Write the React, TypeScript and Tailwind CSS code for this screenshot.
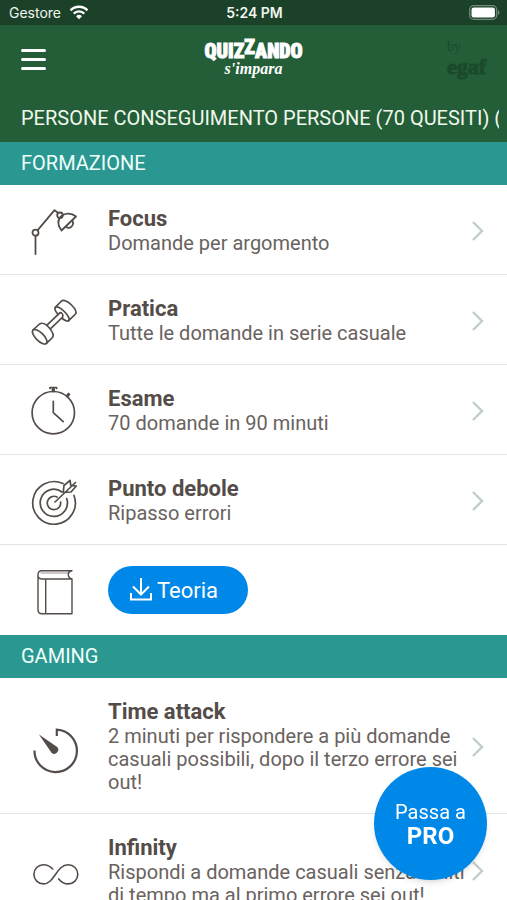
import type { ReactNode } from "react";

interface MenuItem {
  title: string;
  description: string;
  icon: ReactNode;
}

const iconClass = "size-12 shrink-0 overflow-visible fill-none stroke-[#544c48]";

const LampIcon = () => (
  <svg viewBox="0 0 48 48" className={iconClass} strokeWidth="1.8" strokeLinecap="round" strokeLinejoin="round">
    <path d="M5.500 47V28.800M7.700 23.200 24.500 3.200l3.500 2.600" />
    <circle cx="5.500" cy="25.700" r="3" />
    <circle cx="30" cy="8.300" r="2.800" />
    <path d="M31.500 23.500C27.500 18.500 27 12.500 31.500 9 35.500 5.500 41.500 6 46 9.500Z" />
    <path d="M36 19.800c3.500 3 9-1.500 6.300-6.300" />
  </svg>
);

const DumbbellIcon = () => (
  <svg viewBox="0 0 48 48" className={iconClass} strokeWidth="1.7" strokeLinecap="round" strokeLinejoin="round">
    <ellipse cx="9.700" cy="39.700" rx="9.500" ry="4" transform="rotate(45 9.700 39.700)" />
    <path d="M3 33 9.500 27C12 25.500 16 27 19 30.500S24.500 38 22.500 40.500L16.400 46.400" />
    <path d="M16.700 28.300 29.300 16.300M20.700 31.700 32.700 20M29.300 16.300c1-2.300 4.500 1 3.400 3.700" />
    <path d="M25.300 10.300 31 4.500c2.500-2.500 7 0 10.500 3.500s6 6.500 4 9l-6.800 6.700" />
    <path d="M28 17.500c-2.500-3-3.700-5.700-2.700-7.200 1.500-1.500 5.500.7 9 4.200s5.900 7.700 4.400 9.200c-1.200 1-3.700 0-6.500-2.200" />
  </svg>
);

const StopwatchIcon = () => (
  <svg viewBox="0 0 48 48" className={iconClass} strokeWidth="1.7" strokeLinecap="round" strokeLinejoin="round">
    <circle cx="23.300" cy="25.700" r="21.200" />
    <path d="M23.300 14.300v11.400l9.900 9M20 .500h6.600M20 .500v1M26.600 .500v1M22.500 1v3.500M24.100 1v3.500M36.500 8.700l2-2.200M37.500 9.700l2-2.200" />
  </svg>
);

const TargetIcon = () => (
  <svg viewBox="0 0 48 48" className={iconClass} strokeWidth="1.7" strokeLinecap="round" strokeLinejoin="round">
    <path d="M33 6.600A21.300 21.300 0 1 0 44 18.500" />
    <path d="M32 15A13.600 13.600 0 1 0 36.700 21.500" />
    <path d="M27 20A6.700 6.700 0 1 0 30.600 25" />
    <path d="M25 25 45.500 5.500M33.300 14.500l.7-6 6-5.200.8 5 5.500.7-5.300 6-7.500.5" />
  </svg>
);

const BookIcon = () => (
  <svg viewBox="0 0 48 48" className={iconClass} strokeWidth="1.4" strokeLinecap="round" strokeLinejoin="round">
    <path d="M42 4.700H12Q8 4.700 8 8.700v35q0 4 4 4h30V13H12Q8 13 8 9M42 4.700c-5 .8-5 6.500 0 8.300M15.700 13v34.500" />
    <path d="M11 7h28" strokeWidth="0.600" />
  </svg>
);

const TimerIcon = () => (
  <svg viewBox="0 0 48 48" className={iconClass} strokeWidth="2.2">
    <path d="M26.800 13V6.700a21.200 21.200 0 1 1-22.300 20.800" />
    <path d="M9 11.500 26.800 23.700a4 4 0 0 1-5.300 6Z" fill="#544c48" stroke="none" />
  </svg>
);

const InfinityIcon = () => (
  <svg viewBox="0 0 48 48" className={iconClass} strokeWidth="1.6" strokeLinecap="round">
    <path d="M22.700 22C20 19 17 17.700 13.500 17.700a9.600 9.600 0 0 0 0 19.200c11 0 13-19.200 24.700-19.200a9.600 9.600 0 0 1 0 19.200c-4 0-7-2-9.500-5" />
  </svg>
);

const WifiIcon = () => (
  <svg viewBox="0 0 20 15" className="h-[15px] w-5 fill-none stroke-white" strokeWidth="2.4">
    <path d="M1.500 5.300a12 12 0 0 1 17 0M4.700 8.600a7.500 7.500 0 0 1 10.600 0" />
    <path d="M7 11.200a4.300 4.300 0 0 1 6 0l-3 3Z" fill="white" stroke="none" />
  </svg>
);

const BatteryIcon = () => (
  <svg viewBox="0 0 31 15" className="h-[15px] w-[31px]">
    <rect x="0.700" y="0.700" width="27" height="13.600" rx="4" fill="none" stroke="#718a79" strokeWidth="1.3" />
    <rect x="2.500" y="2.500" width="23.400" height="10" rx="2.200" fill="white" />
    <path d="M29 5v5q1.500-1 1.500-2.500T29 5Z" fill="#718a79" />
  </svg>
);

const Chevron = () => (
  <svg viewBox="0 0 12 20" className="h-5 w-3 shrink-0 fill-none stroke-[#bfd0c6]" strokeWidth="2.4">
    <path d="m1 1 9 9-9 9" />
  </svg>
);

const DownloadIcon = () => (
  <svg viewBox="0 0 24 24" className="size-6 fill-none stroke-white" strokeWidth="2">
    <path d="M12 0v16.500M4 8.500l8 8 8-8M2 15v6.500h20V15" />
  </svg>
);

const training: MenuItem[] = [
  { title: "Focus", description: "Domande per argomento", icon: <LampIcon /> },
  { title: "Pratica", description: "Tutte le domande in serie casuale", icon: <DumbbellIcon /> },
  { title: "Esame", description: "70 domande in 90 minuti", icon: <StopwatchIcon /> },
  { title: "Punto debole", description: "Ripasso errori", icon: <TargetIcon /> },
];

const gaming: MenuItem[] = [
  {
    title: "Time attack",
    description: "2 minuti per rispondere a più domande casuali possibili, dopo il terzo errore sei out!",
    icon: <TimerIcon />,
  },
  {
    title: "Infinity",
    description: "Rispondi a domande casuali senza limiti di tempo ma al primo errore sei out!",
    icon: <InfinityIcon />,
  },
];

const SectionTitle = ({ children }: { children: ReactNode }) => (
  <h2 className="bg-[#2a9790] px-[21px] py-2 text-[20px] leading-[27px] text-[#effffb]">{children}</h2>
);

const MenuRow = ({ title, description, icon }: MenuItem) => (
  <li className="border-b border-[#e4e4e4]">
    <a href="#" className="flex items-center pt-[21px] pr-[23px] pb-[19px] pl-[30px]">
      <span className="-my-2 shrink-0">{icon}</span>
      <span className="ml-[30px] flex-1 pr-1">
        <span className="block text-[22px] leading-[26px] font-bold text-[#544c48]">{title}</span>
        <span className="block text-[20px] leading-[23px] text-[#69625e]">{description}</span>
      </span>
      <Chevron />
    </a>
  </li>
);

const App = () => {
  return (
    <div className="flex h-screen flex-col overflow-hidden bg-white font-[Roboto,sans-serif]">
      <div className="grid h-[25px] shrink-0 grid-cols-3 items-center bg-[#1b4128] pr-[7px] pl-[9px] font-[Inter,sans-serif] text-[14px] text-[#f0f5f0]">
        <div className="flex items-center gap-2">
          <span>Gestore</span>
          <WifiIcon />
        </div>
        <span className="text-center font-semibold">5:24 PM</span>
        <div className="flex justify-end">
          <BatteryIcon />
        </div>
      </div>

      <header className="shrink-0 bg-[#235e38] text-[#f0f8ec]">
        <div className="grid h-[68px] grid-cols-3 items-center px-[21px]">
          <button type="button" aria-label="Menu" className="flex w-[25px] flex-col gap-[6px]">
            <span className="h-[3px] rounded-full bg-white" />
            <span className="h-[3px] rounded-full bg-white" />
            <span className="h-[3px] rounded-full bg-white" />
          </button>
          <div className="flex flex-col items-center text-white">
            <span className="flex font-['Roboto_Condensed','Liberation_Sans',sans-serif] text-[20px] leading-5 font-black [-webkit-text-stroke:1px_white]">
              QUIZ<span className="-mt-1">Z</span>ANDO
            </span>
            <span className="font-['Liberation_Serif',serif] text-[16px] leading-4 font-bold italic">s'impara</span>
          </div>
          <div className="flex flex-col items-start justify-self-end text-[#1b4a2b]">
            <span className="font-['Liberation_Serif',serif] text-[14px] leading-4">by</span>
            <span className="font-['Liberation_Serif',serif] text-[22px] leading-6 font-bold [-webkit-text-stroke:1px_#1b4a2b]">
              egaf
            </span>
          </div>
        </div>
        <h1 className="mr-2 ml-[21px] overflow-hidden pt-3 pb-[11px] text-[20px] leading-[26px] whitespace-nowrap">
          PERSONE CONSEGUIMENTO PERSONE (70 QUESITI) (
        </h1>
      </header>

      <main className="flex-1 overflow-y-auto [scrollbar-width:none]">
        <SectionTitle>FORMAZIONE</SectionTitle>
        <ul>
          {training.map((item) => (
            <MenuRow key={item.title} {...item} />
          ))}
        </ul>
        <div className="flex items-center py-[21px] pl-[30px]">
          <BookIcon />
          <button
            type="button"
            className="ml-[30px] flex h-12 w-[140px] items-center gap-1 rounded-full bg-[#0088e8] pl-[21px] text-[22px] text-white"
          >
            <DownloadIcon />
            Teoria
          </button>
        </div>

        <SectionTitle>GAMING</SectionTitle>
        <ul>
          {gaming.map((item) => (
            <MenuRow key={item.title} {...item} />
          ))}
        </ul>
      </main>

      <button
        type="button"
        className="fixed right-5 bottom-5 flex size-[113px] flex-col items-center justify-center rounded-full bg-[#0088e8] text-white shadow-md"
      >
        <span className="text-[20px] leading-6">Passa a</span>
        <span className="text-[24px] leading-6 font-bold">PRO</span>
      </button>
    </div>
  );
};

export default App;
